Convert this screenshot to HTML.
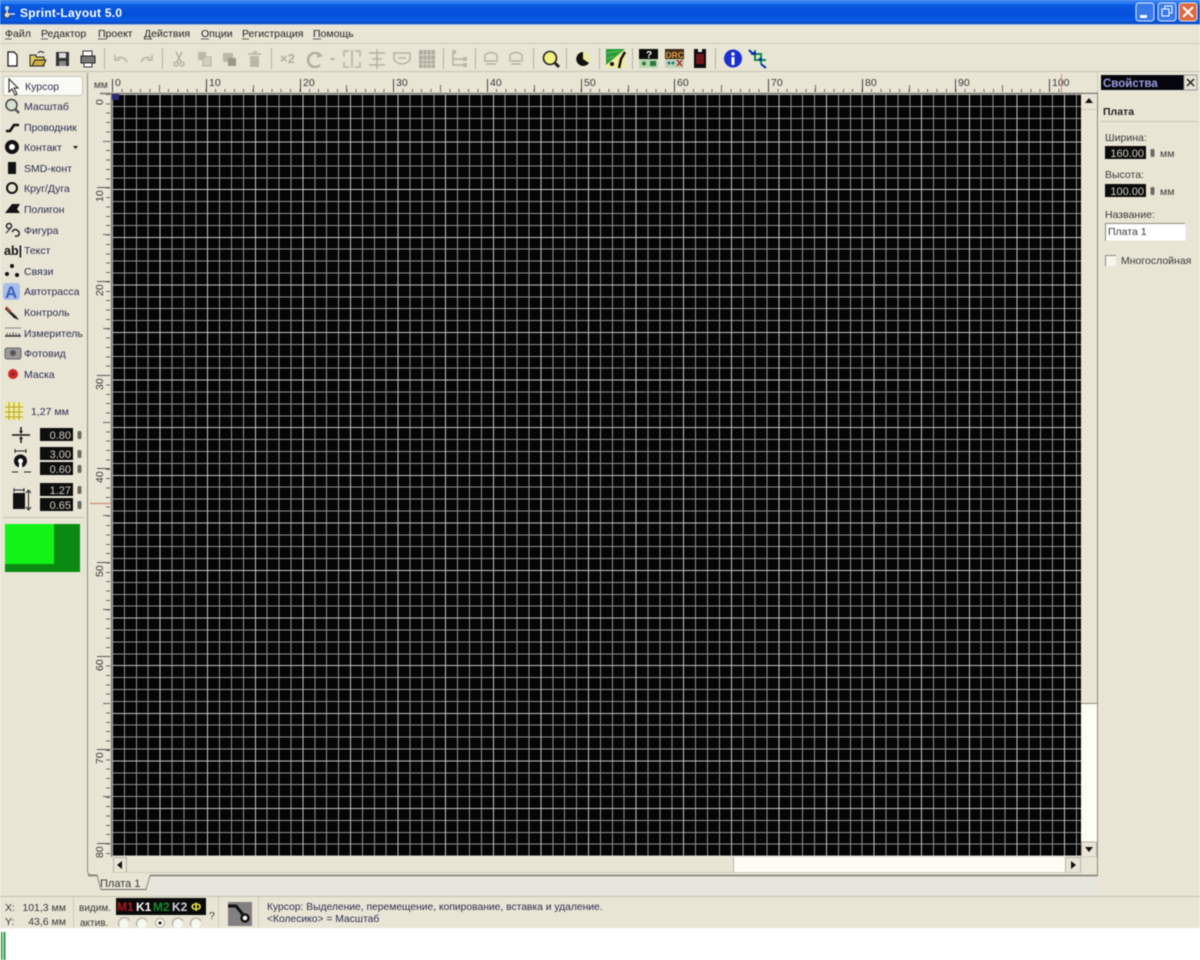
<!DOCTYPE html>
<html lang="ru"><head><meta charset="utf-8"><title>Sprint-Layout 5.0</title>
<style>
html,body{margin:0;padding:0;background:#fff;width:1200px;height:960px;overflow:hidden}
#r{position:relative;width:1200px;height:960px;overflow:hidden;font-family:"Liberation Sans",sans-serif;filter:blur(.4px)}
.a{position:absolute}
#grid{left:112px;top:94px;width:969px;height:762px;background-color:#050505;
background-image:
repeating-linear-gradient(90deg,#c4c4c4 0 1px,transparent 1px 47.6px),
repeating-linear-gradient(180deg,#c4c4c4 0 1px,transparent 1px 47.6px),
repeating-linear-gradient(90deg,#929292 0 1px,transparent 1px 11.9px),
repeating-linear-gradient(180deg,#929292 0 1px,transparent 1px 11.9px)}
#tt{left:112px;top:89px;width:950px;height:3px;background:repeating-linear-gradient(90deg,#666 0 1px,transparent 1px 9.37px)}
#tv{left:106px;top:94px;width:4px;height:762px;background:repeating-linear-gradient(180deg,#666 0 1px,transparent 1px 9.37px)}
svg{position:absolute;left:0;top:0}
text{font-family:"Liberation Sans",sans-serif;font-size:10.5px;fill:#2c2c50}
.k{fill:#383838}
.m{fill:#222}
.b{fill:#d0d0c0;text-anchor:end;font-size:11px}
.u{fill:none;stroke:#333;stroke-width:.8}
.d{fill:none;stroke:#b4b2a4;stroke-width:1.5}
.df{fill:#bab8a9}
</style></head><body><div id="r">
<div class="a" style="left:0;top:0;width:1200px;height:928px;background:#e8e5d5"></div>
<div class="a" style="left:0;top:928px;width:1200px;height:32px;background:#fff"></div>
<div class="a" style="left:0;top:0;width:1200px;height:24px;background:linear-gradient(180deg,#0a5fe6 0,#3b8cf5 2px,#0a5ae0 5px,#0550dc 14px,#0a5ce8 20px,#0a4fc8 23px,#0441b8 24px)"></div>
<div class="a" style="left:0;top:24px;width:1200px;height:1px;background:#9fb8e8"></div>
<div class="a" id="tt"></div>
<div class="a" id="tv"></div>
<div class="a" id="grid"></div>
<svg width="1200" height="960" viewBox="0 0 1200 960">
<!-- title bar -->
<g><circle cx="7" cy="8" r="2" fill="#dcdcd0"/><circle cx="7" cy="15" r="3" fill="#d8d8cc" stroke="#333"/><path d="M7 9V13M9 14H15" stroke="#ddd" stroke-width="1.5"/></g>
<text x="20" y="17" style="font-size:12px;font-weight:bold;fill:#fff;letter-spacing:.25px">Sprint-Layout 5.0</text>
<g><rect x="1136" y="3" width="18" height="18" rx="3" fill="#3a7ae8" stroke="#dfe9fb"/><rect x="1140" y="15" width="7" height="3" fill="#fff"/>
<rect x="1158" y="3" width="18" height="18" rx="3" fill="#3a7ae8" stroke="#dfe9fb"/><rect x="1165" y="6" width="7" height="7" fill="none" stroke="#fff"/><rect x="1162" y="9" width="7" height="7" fill="#3a7ae8" stroke="#fff"/>
<rect x="1179" y="3" width="18" height="18" rx="3" fill="#dd6a42" stroke="#f2dccf"/><path d="M1183 7L1193 17M1193 7L1183 17" stroke="#fff" stroke-width="2"/></g>
<!-- menu -->
<g>
<text class="m" x="5" y="37">Файл</text><text class="m" x="41" y="37">Редактор</text><text class="m" x="98" y="37">Проект</text><text class="m" x="144" y="37">Действия</text><text class="m" x="201" y="37">Опции</text><text class="m" x="242" y="37">Регистрация</text><text class="m" x="313" y="37">Помощь</text>
<path class="u" d="M5 39H12M41 39H48M98 39H106M144 39H152M201 39H209M242 39H249M313 39H321"/>
</g>
<path d="M0 43.5H1200" stroke="#cfccbb"/><path d="M0 71.5H1200" stroke="#c8c5b4"/>
<!-- toolbar separators -->
<path d="M104.5 48V69M162.5 48V69M271.5 48V69M443.5 48V69M475.5 48V69M533.5 48V69M566.5 48V69M599.5 48V69M632.5 48V69M715.5 48V69" stroke="#b4b2a2"/>
<!-- new -->
<path d="M8 52H14L17 55V66H8Z" fill="#fff" stroke="#111" stroke-width="1.2"/>
<!-- open -->
<path d="M30 55H36V57H44V66H30Z" fill="#e0c860" stroke="#222"/><path d="M38 53Q41 50 44 53" fill="none" stroke="#222"/><path d="M32 66L35 60H46L43 66Z" fill="#c9b040" stroke="#222"/>
<!-- save -->
<rect x="56" y="52" width="13" height="14" fill="#333"/><rect x="59" y="53" width="7" height="5" fill="#ddd"/><rect x="59" y="61" width="7" height="5" fill="#888"/>
<!-- print -->
<path d="M83 51H92V56H83Z" fill="#fff" stroke="#333"/><path d="M81 56H95V63H81Z" fill="#777" stroke="#222"/><path d="M84 63H92V67H84Z" fill="#fff" stroke="#333"/>
<!-- undo redo -->
<path class="d" d="M127 62Q124 56 117 58M115 55V60H120"/><path class="d" d="M141 62Q144 56 150 58M152 55V60H147"/>
<!-- cut copy paste trash -->
<path class="d" d="M176 52L181 62M182 52L177 62"/><circle class="d" cx="176" cy="64" r="2"/><circle class="d" cx="182" cy="64" r="2"/>
<path class="df" d="M198 52H206V60H198Z"/><path d="M203 57H211V66H203Z" fill="#d2cfbf" stroke="#b4b2a4"/>
<path class="df" d="M223 53H233V62H223Z"/><rect x="228" y="58" width="8" height="8" fill="#9a9888"/>
<path class="df" d="M250 56H259V67H250Z"/><path class="d" d="M248 54H261M253 52H257"/>
<!-- x2 -->
<text x="280" y="63" style="font-size:13px;font-weight:bold;fill:#b0ae9f">×2</text>
<path d="M320 55A7 7 0 1 0 320 65" fill="none" stroke="#b0ae9f" stroke-width="2.5"/><path d="M318 52L323 56L317 58Z" fill="#b0ae9f"/>
<path d="M330 58H335L332.500 61Z" fill="#b0ae9f"/>
<path class="d" d="M344 57V51H349M360 57V51H355M344 62V67H349M360 62V67H355M352 50V68"/>
<path class="d" d="M369 53H385M369 65H385M372 59H382M377 49V69"/>
<path class="d" d="M394 53H410V60Q402 68 394 60Z"/><path class="d" d="M398 58H406"/>
<rect x="419" y="50" width="16" height="18" fill="#aeac9e"/><path d="M419 55H435M419 60H435M419 64H435M423 50V68M427 50V68M431 50V68" stroke="#d5d2c3"/>
<!-- 459 -->
<path class="d" d="M453 53V65H463M453 59H463"/><rect class="df" x="452" y="50" width="4" height="4"/><rect class="df" x="463" y="57" width="4" height="4"/><rect class="df" x="463" y="63" width="4" height="4"/>
<!-- 491 516 -->
<path class="d" d="M485 60V55Q491 50 497 55V60M484 61H498M486 64H496"/><path class="d" d="M510 60V55Q516 50 522 55V60M509 61H523M511 64H521"/>
<!-- magnifier -->
<circle cx="550" cy="58" r="6.500" fill="#f4f080" stroke="#222" stroke-width="1.6"/><path d="M555 63L559 67" stroke="#222" stroke-width="3"/>
<!-- half circle -->
<circle cx="583" cy="59" r="7" fill="#f0e8a0"/><path d="M583 52A7 7 0 1 0 589 63L583 59Z" fill="#111"/>
<!-- layers -->
<rect x="606" y="49" width="19" height="19" fill="#f2ec9c"/><path d="M606 49H625L606 65Z" fill="#2a9a3a"/><path d="M607 53L620 51M607 59L614 56" stroke="#60c060"/><path d="M619 68L621 59L625 52" stroke="#111" stroke-width="2.5" fill="none"/><circle cx="612" cy="64" r="2" fill="#111"/>
<!-- ? -->
<rect x="639" y="49" width="19" height="19" fill="#b8d4b0"/><rect x="639" y="49" width="19" height="10" fill="#0c0c0c"/><text x="646" y="58" style="font-size:10px;font-weight:bold;fill:#fff">?</text><circle cx="644" cy="63.500" r="2" fill="#2a7a3a"/><rect x="650" y="61" width="6" height="5" fill="#2a7a3a"/>
<!-- DRC -->
<rect x="665" y="49" width="19" height="19" fill="#c0d0b4"/><rect x="665" y="49" width="19" height="10" fill="#3a2a1a"/><text x="665.500" y="58" style="font-size:8.500px;font-weight:bold;fill:#e8a040">DRC</text><circle cx="669" cy="63" r="1.500" fill="#277"/><circle cx="673" cy="63" r="1.500" fill="#277"/><path d="M677 60L682 66M682 60L677 66" stroke="#a33" stroke-width="1.500"/>
<!-- M -->
<path d="M694 49H698V52H702V49H706V68H694Z" fill="#0c0c0c"/><rect x="696" y="54" width="8" height="10" fill="#701818"/>
<!-- info -->
<circle cx="733" cy="58.500" r="9" fill="#1a30d0"/><circle cx="733" cy="54" r="1.700" fill="#fff"/><path d="M733 57V65" stroke="#fff" stroke-width="3"/>
<!-- crop -->
<path d="M751 54H761V64M755 50V60H766" fill="none" stroke="#108848" stroke-width="2"/><path d="M749 50L753 54M761 64L766 68" stroke="#0a2ab0" stroke-width="2"/><rect x="753" y="52" width="3" height="3" fill="#0a2ab0"/><rect x="759" y="58" width="3" height="3" fill="#0a2ab0"/>
<!-- panel frame -->
<path d="M87.500 73V871Q88 875 92 875H97L101 889.500H146L150 875.500H1098" fill="none" stroke="#8c8a7c"/>
<rect x="102" y="889" width="44" height="1" fill="#666"/>
<rect x="151" y="876" width="947" height="20" fill="#e6e5dc"/>
<path d="M88 875.500H97M150 875.500H1098" stroke="#7c7a70" stroke-width="1.500"/>
<path d="M1097.500 92V876" stroke="#8c8a7c"/>
<path d="M100 93.500H1097M111.500 93V857" stroke="#7c7a6e" stroke-width="1.500"/>
<path d="M1097.500 72V92" stroke="#d0cdbc"/>
<!-- ruler top -->
<text x="94" y="88" class="k" style="font-size:10px">мм</text>
<g>
<text class="k" x="115" y="86">0</text><text class="k" x="209" y="86">10</text><text class="k" x="303" y="86">20</text><text class="k" x="396" y="86">30</text><text class="k" x="490" y="86">40</text><text class="k" x="584" y="86">50</text><text class="k" x="677" y="86">60</text><text class="k" x="771" y="86">70</text><text class="k" x="865" y="86">80</text><text class="k" x="958" y="86">90</text><text class="k" x="1052" y="86">100</text>
</g>
<path d="M112.500 79V92M206.500 79V92M300.500 79V92M393.500 79V92M487.500 79V92M581.500 79V92M674.500 79V92M768.500 79V92M862.500 79V92M955.500 79V92M1049.500 79V92" stroke="#444"/>
<path d="M159.500 85V92M253.500 85V92M346.500 85V92M440.500 85V92M534.500 85V92M628.500 85V92M721.500 85V92M815.500 85V92M909.500 85V92M1002.500 85V92" stroke="#666"/>
<path d="M1061.500 74V93" stroke="#d08a80"/>
<!-- ruler left -->
<g>
<text class="k" transform="translate(103,105) rotate(-90)">0</text>
<text class="k" transform="translate(103,202) rotate(-90)">10</text>
<text class="k" transform="translate(103,296) rotate(-90)">20</text>
<text class="k" transform="translate(103,390) rotate(-90)">30</text>
<text class="k" transform="translate(103,483) rotate(-90)">40</text>
<text class="k" transform="translate(103,577) rotate(-90)">50</text>
<text class="k" transform="translate(103,671) rotate(-90)">60</text>
<text class="k" transform="translate(103,764) rotate(-90)">70</text>
<text class="k" transform="translate(103,858) rotate(-90)">80</text>
</g>
<path d="M97 187.500H110M97 281.500H110M97 375.500H110M97 468.500H110M97 562.500H110M97 656.500H110M97 749.500H110M97 843.500H110" stroke="#555"/>
<path d="M103 141.500H110M103 234.500H110M103 328.500H110M103 422.500H110M103 515.500H110M103 609.500H110M103 703.500H110M103 796.500H110" stroke="#666"/>
<path d="M90 503.500H111" stroke="#d08a78" stroke-width="1.300"/>
<rect x="112" y="94" width="7" height="6" fill="#2a2a80"/>
<!-- scrollbars -->
<rect x="1081" y="94" width="16" height="609" fill="#e8e5d5"/>
<path d="M1081 703.500H1097" stroke="#8c8a7c"/>
<rect x="1081" y="704" width="16" height="138" fill="#fdfdf6"/>
<rect x="1081" y="94" width="16" height="15" fill="#e8e5d5"/><path d="M1089 98L1085 103H1093Z" fill="#111"/>
<path d="M1081 109.500H1097" stroke="#cfccbc"/>
<rect x="1081.500" y="842" width="15" height="15" fill="#e8e5d5" stroke="#b5b3a4"/><path d="M1085 847H1093L1089 852Z" fill="#111"/>
<rect x="112" y="857" width="985" height="16" fill="#e8e5d5"/>
<rect x="733" y="857" width="332" height="16" fill="#fdfdf6"/>
<path d="M733.500 857V873" stroke="#b5b3a4"/>
<rect x="113.500" y="857.500" width="13" height="15" fill="#e8e5d5" stroke="#b5b3a4"/><path d="M117 865L122 861V869Z" fill="#111"/>
<rect x="1065.500" y="857.500" width="15" height="15" fill="#e8e5d5" stroke="#b5b3a4"/><path d="M1076 865L1071 861V869Z" fill="#111"/>
<path d="M112 872.500H1081" stroke="#d0cdbd"/>
<text x="100" y="887" class="k" style="font-size:11px">Плата 1</text>
<!-- left tool list -->
<rect x="3.500" y="76.500" width="79" height="19" rx="2" fill="#fafaf4" stroke="#c8c6b8"/>
<g>
<text x="25" y="90">Курсор</text><text x="24" y="110">Масштаб</text><text x="24" y="131">Проводник</text><text x="24" y="151">Контакт</text><text x="24" y="172">SMD-конт</text><text x="24" y="192">Круг/Дуга</text><text x="24" y="213">Полигон</text><text x="24" y="234">Фигура</text><text x="24" y="254">Текст</text><text x="24" y="275">Связи</text><text x="24" y="295">Автотрасса</text><text x="24" y="316">Контроль</text><text x="24" y="337">Измеритель</text><text x="24" y="357">Фотовид</text><text x="24" y="378">Маска</text>
</g>
<path d="M9 79V92L12 89L15 95L17 94L14 88H18Z" fill="#fff" stroke="#222"/>
<circle cx="11.500" cy="105" r="5.500" fill="#d8e0d0" stroke="#444" stroke-width="1.500"/><path d="M15 109L19 113" stroke="#555" stroke-width="2.500"/>
<path d="M6 131L10 131L14 125H19" fill="none" stroke="#111" stroke-width="2.500"/>
<circle cx="12" cy="147" r="5" fill="#fff" stroke="#111" stroke-width="4"/>
<path d="M73 146H78L75.500 149Z" fill="#222"/>
<rect x="8" y="162" width="8" height="12" fill="#111"/>
<circle cx="12" cy="188" r="5" fill="none" stroke="#111" stroke-width="2"/>
<path d="M5 213L12 204H20L17 209L20 213Z" fill="#111"/>
<circle cx="9" cy="226" r="2.500" fill="none" stroke="#222" stroke-width="1.500"/><path d="M12 232Q15 227 19 232Q20 237 15 236" fill="none" stroke="#222" stroke-width="1.500"/><path d="M6 233L10 229" stroke="#222"/>
<text x="4" y="255" style="font-size:12.500px;font-weight:bold;fill:#111">ab|</text>
<circle cx="12" cy="266" r="2" fill="#111"/><circle cx="7" cy="274" r="2" fill="#111"/><circle cx="17" cy="275" r="2" fill="#111"/>
<rect x="3" y="283" width="17" height="17" rx="3" fill="#a8bde8"/><text x="5" y="298" style="font-size:17px;font-weight:bold;fill:#3a62b8">A</text>
<path d="M6 307L16 316L19 320L14 318L5 309Z" fill="#222"/><path d="M6 307L11 312" stroke="#b04a3a" stroke-width="2"/>
<path d="M5 336H21" stroke="#333" stroke-width="1.500"/><path d="M5 328H21" stroke="#888"/><path d="M7 336V333M10 336V333M13 336V332M16 336V333M19 336V333" stroke="#555"/>
<rect x="5" y="348" width="16" height="11" rx="2" fill="#999" stroke="#666"/><circle cx="13" cy="353" r="3" fill="#555"/>
<circle cx="13" cy="374" r="5" fill="#d02a2a"/><circle cx="13" cy="374" r="1.500" fill="#802020"/>
<!-- grid -->
<rect x="5" y="402" width="18" height="18" fill="#f0ec9c"/>
<path d="M5 407H23M5 412H23M5 417H23M9 402V420M14 402V420M19 402V420" stroke="#b8a42a"/>
<text x="31" y="415">1,27 мм</text>
<!-- values -->
<g fill="#0e0e0e"><rect x="40" y="428" width="33" height="13"/><rect x="40" y="447" width="33" height="13"/><rect x="40" y="462" width="33" height="13"/><rect x="40" y="483" width="33" height="13"/><rect x="40" y="498" width="33" height="13"/></g>
<g><text class="b" x="71" y="439">0.80</text><text class="b" x="71" y="458">3.00</text><text class="b" x="71" y="473">0.60</text><text class="b" x="71" y="494">1.27</text><text class="b" x="71" y="509">0.65</text></g>
<g fill="#6a6a60"><rect x="77.500" y="431" width="4" height="8" rx="1.500"/><rect x="77.500" y="450" width="4" height="8" rx="1.500"/><rect x="77.500" y="465" width="4" height="8" rx="1.500"/><rect x="77.500" y="486" width="4" height="8" rx="1.500"/><rect x="77.500" y="501" width="4" height="8" rx="1.500"/></g>
<path d="M12 435H30" stroke="#111" stroke-width="1.500"/><path d="M21 427V431M21 439V443" stroke="#111" stroke-width="1.500"/><path d="M19 431H23L21 434ZM19 439H23L21 436Z" fill="#111"/>
<path d="M15 451H26M12 472H18M24 472H31" stroke="#222"/><path d="M15 449V453M26 449V453" stroke="#222"/>
<circle cx="20.500" cy="461" r="4.500" fill="#fff" stroke="#111" stroke-width="4"/><rect x="19" y="463" width="3" height="5" fill="#fff"/>
<path d="M14 490H24" stroke="#222"/><path d="M14 488V492M24 488V492" stroke="#222"/><rect x="13" y="493" width="12" height="16" fill="#111"/><path d="M28.500 491V509" stroke="#222"/><path d="M26 493L28.500 490L31 493M26 507L28.500 510L31 507" fill="none" stroke="#222"/>
<path d="M3 517.500H84" stroke="#c4c1b0"/>
<rect x="5" y="524" width="75" height="48" fill="#0a8a12"/><rect x="5" y="524" width="49" height="40" fill="#12f418"/>
<!-- right panel -->
<rect x="1101" y="75" width="83" height="15" fill="#06060e"/>
<text x="1103" y="87" style="font-size:11.500px;font-weight:bold;fill:#9c9ce0">Свойства</text>
<rect x="1184" y="75" width="13" height="15" fill="#e4e2d4" stroke="#999"/><path d="M1187 79L1194 86M1194 79L1187 86" stroke="#222" stroke-width="1.500"/>
<text x="1103" y="115" style="font-weight:bold;fill:#222">Плата</text>
<path d="M1101 121.500H1198" stroke="#c4c1b0"/>
<text x="1105" y="141" class="k">Ширина:</text>
<rect x="1105" y="146" width="41" height="13" fill="#0b0b0b"/><text class="b" x="1144" y="157">160.00</text>
<rect x="1150.500" y="149" width="4" height="8" rx="1.500" fill="#6a6a60"/><text x="1160" y="157" class="k">мм</text>
<text x="1105" y="178" class="k">Высота:</text>
<rect x="1105" y="184" width="41" height="13" fill="#0b0b0b"/><text class="b" x="1144" y="195">100.00</text>
<rect x="1150.500" y="187" width="4" height="8" rx="1.500" fill="#6a6a60"/><text x="1160" y="195" class="k">мм</text>
<text x="1105" y="218" class="k">Название:</text>
<rect x="1105.500" y="223.500" width="80" height="17" fill="#fff"/><path d="M1105.500 241V223.500H1185" fill="none" stroke="#8c8a7c"/>
<text x="1108" y="235" class="k">Плата 1</text>
<rect x="1105" y="255" width="11" height="11" fill="#f6f6ec"/><path d="M1105.500 266V255.500H1116" fill="none" stroke="#888"/>
<text x="1121" y="264" class="k">Многослойная</text>
<!-- status -->
<path d="M0 896.500H1200" stroke="#c4c1ae"/>
<path d="M0 928H1200" stroke="#f0eee2"/>
<text x="5" y="911" class="k">X:</text><text x="5" y="925" class="k">Y:</text>
<text x="66" y="911" class="k" text-anchor="end">101,3 мм</text><text x="66" y="925" class="k" text-anchor="end">43,6 мм</text>
<path d="M73.500 897V928M218.500 897V928M258.500 897V928" stroke="#cfccba"/>
<text x="79" y="911" class="k" style="font-size:10px">видим.</text><text x="80" y="926" class="k" style="font-size:10px">актив.</text>
<rect x="116" y="898" width="90" height="17" fill="#0a0a0a"/>
<text x="117" y="911" style="font-weight:bold;font-size:12px;fill:#b01820">M1</text>
<text x="136" y="911" style="font-weight:bold;font-size:12px;fill:#fff">K1</text>
<text x="153" y="911" style="font-weight:bold;font-size:12px;fill:#138a2e">M2</text>
<text x="172" y="911" style="font-weight:bold;font-size:12px;fill:#d0d4e0">K2</text>
<text x="191" y="911" style="font-weight:bold;font-size:12px;fill:#e8e040">Ф</text>
<g fill="#f8f8f2" stroke="#a8a698"><path d="M119 926A5.500 5.500 0 0 1 130 921" fill="none"/><circle cx="124" cy="924" r="4.500" stroke="none"/><path d="M137 926A5.500 5.500 0 0 1 147 921" fill="none"/><circle cx="142" cy="924" r="4.500" stroke="none"/><circle cx="160" cy="923" r="4.500"/><circle cx="178" cy="924" r="4.500" stroke="none"/><path d="M173 926A5.500 5.500 0 0 1 183 921" fill="none"/><circle cx="196" cy="924" r="4.500" stroke="none"/><path d="M191 926A5.500 5.500 0 0 1 201 921" fill="none"/></g>
<circle cx="160" cy="923" r="1.500" fill="#111"/>
<text x="209" y="919" class="k">?</text>
<rect x="228" y="902" width="24" height="24" fill="#808080"/>
<path d="M228 906H236L245 917" fill="none" stroke="#111" stroke-width="3"/><circle cx="245" cy="918" r="3.500" fill="#fff" stroke="#111" stroke-width="2.500"/>
<text x="267" y="910" style="font-size:10.300px">Курсор: Выделение, перемещение, копирование, вставка и удаление.</text>
<text x="267" y="922" style="font-size:10.300px">&lt;Колесико&gt; = Масштаб</text>
<!-- sliver -->
<rect x="0" y="930" width="6" height="30" fill="#fff"/><rect x="1" y="932" width="1.500" height="28" fill="#3a8a4a"/><rect x="3.500" y="932" width="2" height="28" fill="#2a9a48"/>
</svg>
</div></body></html>
